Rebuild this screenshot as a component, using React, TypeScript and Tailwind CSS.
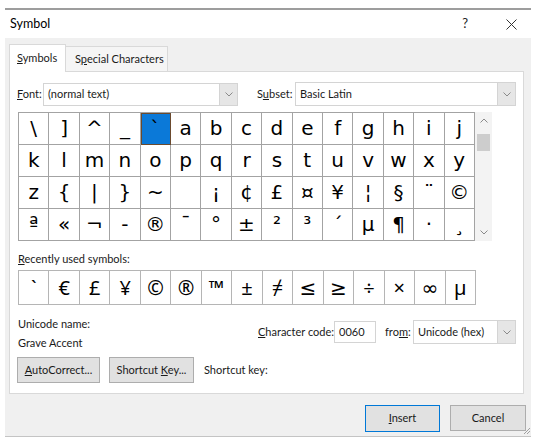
const GRID: string[][] = [
  ['\\', ']', '^', '_', '`', 'a', 'b', 'c', 'd', 'e', 'f', 'g', 'h', 'i', 'j'],
  ['k', 'l', 'm', 'n', 'o', 'p', 'q', 'r', 's', 't', 'u', 'v', 'w', 'x', 'y'],
  ['z', '{', '|', '}', '~', '\u00a0', '¡', '¢', '£', '¤', '¥', '¦', '§', '¨', '©'],
  ['ª', '«', '¬', '-', '®', '¯', '°', '±', '²', '³', '´', 'µ', '¶', '·', '¸'],
]

const RECENT = ['`', '€', '£', '¥', '©', '®', '™', '±', '≠', '≤', '≥', '÷', '×', '∞', 'µ']

function Chevron({ up = false }: { up?: boolean }) {
  return (
    <svg width="8" height="5" viewBox="0 0 8 5" className={up ? 'rotate-180' : ''}>
      <path d="M0.5 0.5 L4 4 L7.5 0.5" fill="none" stroke="#8a8a8a" strokeWidth="1" />
    </svg>
  )
}

function Dropdown({ value, width, height }: { value: string; width: string; height: string }) {
  return (
    <div className={`flex ${width} ${height} border border-[#d4d4d4] bg-white`}>
      <div className="flex flex-1 items-center whitespace-nowrap pl-[4px]">{value}</div>
      <div className="flex w-[18px] items-center justify-center border-l border-[#d4d4d4] bg-[#e6e6e6]">
        <Chevron />
      </div>
    </div>
  )
}

function U({ children }: { children: string }) {
  return <span className="underline underline-offset-[1px]">{children}</span>
}

function Btn({ children, width, primary = false }: { children: React.ReactNode; width: string; primary?: boolean }) {
  return (
    <button
      type="button"
      className={`flex ${width} items-center justify-center whitespace-nowrap border bg-[#e1e1e1] text-[11px] text-[#1a1a1a] ${
        primary ? 'h-[27px] border-[#0078d7]' : 'h-[26px] border-[#adadad]'
      }`}
    >
      {children}
    </button>
  )
}

export default function App() {
  return (
    <div className="relative h-[445px] w-[538px] overflow-hidden bg-white font-['Lato','Noto_Sans',sans-serif] text-[#1a1a1a]">
      <div className="ml-[5px] mt-[8px] flex h-[429px] w-[526px] flex-col border-t-2 border-b border-t-[#9d9d9d] border-b-[#c4c4c4]">
        {/* title bar */}
        <div className="flex h-[28px] items-center bg-white pl-[5px] pr-[14px]">
          <span className="text-[12.5px] text-black">Symbol</span>
          <span className="ml-auto text-[13px] text-[#222]">?</span>
          <svg width="11" height="11" viewBox="0 0 11 11" className="ml-[38px]">
            <path d="M0.5 0.5 L10.5 10.5 M10.5 0.5 L0.5 10.5" stroke="#333" strokeWidth="1" />
          </svg>
        </div>

        {/* body */}
        <div className="relative flex flex-1 flex-col bg-[#f0f0f0] pl-[4px] pt-[6px] text-[11px]">
          {/* tabs */}
          <div className="flex h-[27px] items-end whitespace-nowrap">
            <div className="relative z-10 -mb-px flex h-[28px] w-[57px] items-center border border-b-0 border-[#d9d9d9] bg-white pl-[7px]">
              <span className="-mt-[1px]">
                <U>S</U>ymbols
              </span>
            </div>
            <div className="flex h-[25px] w-[102px] items-center border border-l-0 border-b-0 border-[#d9d9d9] bg-[#f5f5f5] pl-[9px]">
              <span>
                S<U>p</U>ecial Characters
              </span>
            </div>
          </div>

          {/* panel */}
          <div className="flex h-[323px] w-[515px] flex-col border border-[#d9d9d9] bg-white pl-[7px]">
            {/* font / subset */}
            <div className="mt-[10px] flex items-center whitespace-nowrap">
              <span className="w-[26px]">
                <U>F</U>ont:
              </span>
              <Dropdown value="(normal text)" width="w-[195px]" height="h-[23px]" />
              <span className="ml-[19px] w-[38px]">
                S<U>u</U>bset:
              </span>
              <Dropdown value="Basic Latin" width="w-[221px]" height="h-[24px]" />
            </div>

            {/* symbol grid */}
            <div className="ml-[1px] mt-[6px] flex">
              <div className="grid w-[457px] grid-cols-[repeat(15,minmax(0,1fr))] border-l border-t border-[#a3a3a3] font-['DejaVu_Sans',sans-serif] text-[20px] text-black">
                {GRID.flat().map((ch, i) => (
                  <div
                    key={i}
                    className={`h-[32px] overflow-hidden border-b border-r border-[#a3a3a3] text-center leading-[31px] ${
                      i === 4 ? 'bg-[#0b79d8] outline outline-1 -outline-offset-1 outline-[#6b4a2e]' : ''
                    }`}
                  >
                    {ch}
                  </div>
                ))}
              </div>
              <div className="relative flex h-[129px] w-[17px] flex-col items-center bg-[#f3f3f3]">
                <div className="mt-[6px]">
                  <Chevron up />
                </div>
                <div className="mt-[11px] h-[17px] w-[13px] bg-[#cdcdcd]" />
                <div className="mt-auto mb-[6px]">
                  <Chevron />
                </div>
              </div>
            </div>

            {/* recently used */}
            <div className="ml-[1px] mt-[10px] whitespace-nowrap leading-[16px]">
              <U>R</U>ecently used symbols:
            </div>
            <div className="ml-[1px] mt-[3px] grid w-[458px] grid-cols-[repeat(15,minmax(0,1fr))] border-l border-t border-[#b5b5b5] font-['Noto_Sans','DejaVu_Sans',sans-serif] text-[20px] text-black">
              {RECENT.map((ch, i) => (
                <div key={i} className="h-[34px] border-b border-r border-[#b5b5b5] text-center leading-[33px]">
                  {ch}
                </div>
              ))}
            </div>

            {/* unicode name / character code */}
            <div className="ml-[1px] mt-[11px] flex whitespace-nowrap">
              <div className="flex w-[240px] flex-col">
                <span className="leading-[16px]">Unicode name:</span>
                <span className="mt-[3px] leading-[16px]">Grave Accent</span>
              </div>
              <div className="mt-[4px] flex h-[24px] items-center">
                <span className="w-[76px]">
                  <U>C</U>haracter code:
                </span>
                <div className="flex h-[22px] w-[42px] items-center border border-[#d4d4d4] pl-[4px]">0060</div>
                <span className="ml-[9px] w-[28px]">
                  fro<U>m</U>:
                </span>
                <Dropdown value="Unicode (hex)" width="w-[103px]" height="h-[24px]" />
              </div>
            </div>

            {/* buttons */}
            <div className="mt-[6px] flex items-center whitespace-nowrap">
              <Btn width="w-[83px]">
                <span>
                  <U>A</U>utoCorrect...
                </span>
              </Btn>
              <div className="ml-[9px]">
                <Btn width="w-[85px]">
                  <span>
                    Shortcut <U>K</U>ey...
                  </span>
                </Btn>
              </div>
              <span className="ml-[10px]">Shortcut key:</span>
            </div>
          </div>

          {/* dialog buttons */}
          <div className="mt-[11px] flex justify-end gap-[10px] pr-[5px]">
            <Btn width="w-[75px]" primary>
              <span>
                <U>I</U>nsert
              </span>
            </Btn>
            <Btn width="w-[76px]">Cancel</Btn>
          </div>

          {/* resize grip */}
          <svg width="8" height="8" viewBox="0 0 8 8" className="absolute bottom-[1px] right-[0px]">
            <path d="M7 1 L1 7 M7 4 L4 7" stroke="#a0a0a0" strokeWidth="1" />
          </svg>
        </div>
      </div>
    </div>
  )
}
